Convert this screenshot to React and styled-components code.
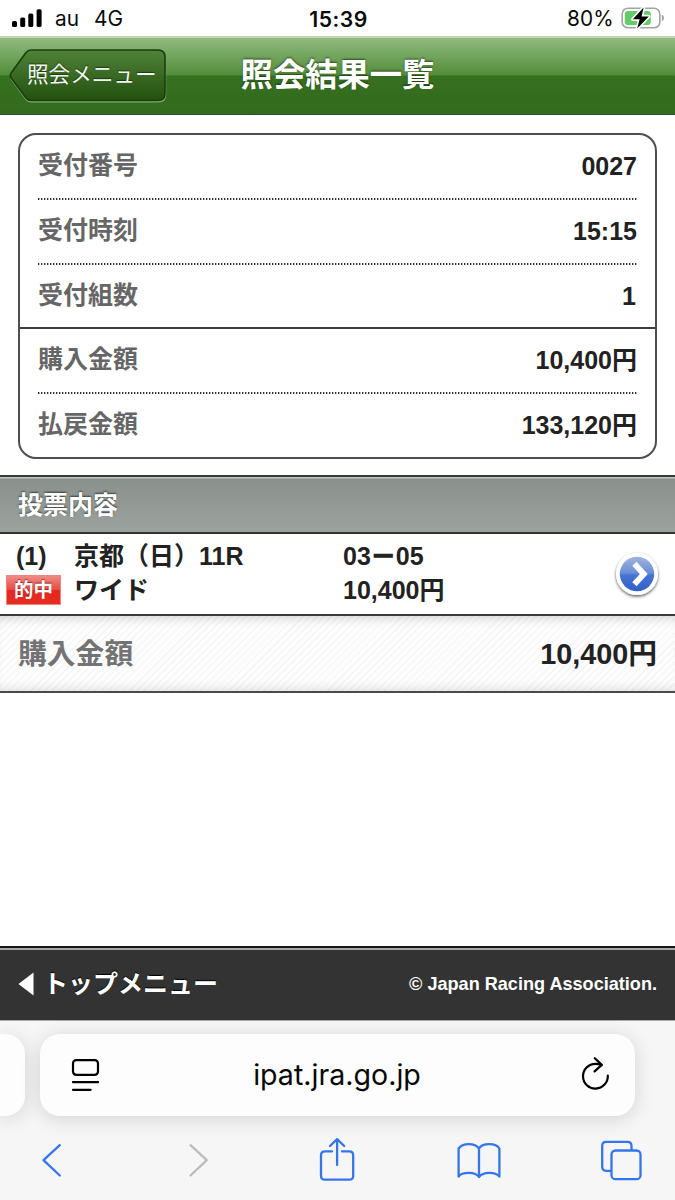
import React from 'react';
import styled, { createGlobalStyle } from 'styled-components';

const RECEIPT_ROWS = [
  { label: '受付番号', value: '0027', height: 65 },
  { label: '受付時刻', value: '15:15', height: 65 },
  { label: '受付組数', value: '1', height: 64, inset: 1, line: 'solid' },
  { label: '購入金額', value: '10,400円', height: 65 },
  { label: '払戻金額', value: '133,120円', height: 63, line: 'none' },
];

const StatusBar = () => (
  <StatusWrapper>
    <Carrier>
      <svg width="30" height="20" viewBox="0 0 30 20">
        <rect x="0" y="13" width="5" height="6" rx="1.6" />
        <rect x="8.2" y="9.5" width="5" height="9.5" rx="1.6" />
        <rect x="16.3" y="5.5" width="5" height="13.5" rx="1.6" />
        <rect x="24.6" y="1.2" width="5" height="17.8" rx="1.6" />
      </svg>
      <span>au</span>
      <span>4G</span>
    </Carrier>
    <Clock>15:39</Clock>
    <Battery>
      <span>80%</span>
      <svg width="44" height="24" viewBox="0 0 44 24">
        <rect
          x="1.2"
          y="2.2"
          width="37.6"
          height="19.6"
          rx="5.8"
          fill="none"
          stroke="#a3a3a5"
          strokeWidth="1.6"
        />
        <path d="M40.8 8.6q2.2 1 2.2 3.4t-2.2 3.4z" fill="#a3a3a5" />
        <rect x="3.8" y="5" width="26" height="14" rx="3.2" fill="#64cb67" />
        <path
          d="M22.6 1.6L11.8 13.3h6.8L16.2 22.6 27.8 10.4h-7.2z"
          fill="#000"
          stroke="#fff"
          strokeWidth="3.4"
          paintOrder="stroke"
          strokeLinejoin="round"
        />
      </svg>
    </Battery>
  </StatusWrapper>
);

const Header = () => (
  <HeaderWrapper>
    <BackButton>
      <svg width="158" height="54" viewBox="0 0 158 54">
        <defs>
          <linearGradient id="back" x1="0" y1="0" x2="0" y2="1">
            <stop offset="0" stopColor="#508238" />
            <stop offset="1" stopColor="#23500f" />
          </linearGradient>
        </defs>
        <path
          d="M22 2.2H149Q156.5 2.2 156.5 9V45.5Q156.5 52.8 149 52.8H22Q19 52.8 17 50.3L1.5 29"
          fill="none"
          stroke="#80ab6b"
          strokeWidth="1.4"
        />
        <path
          d="M22 1H149Q156 1 156 8V44.5Q156 51.5 149 51.5H22Q19 51.5 17 49L1.8 28.5Q.8 26.5 1.8 24.5L17 3.5Q19 1 22 1z"
          fill="url(#back)"
          stroke="#173f0c"
          strokeWidth="1.6"
        />
      </svg>
      <span>照会メニュー</span>
    </BackButton>
    <h1>照会結果一覧</h1>
  </HeaderWrapper>
);

const ArrowBadge = () => (
  <ArrowButton>
    <svg width="52" height="54" viewBox="0 0 52 54">
      <defs>
        <linearGradient id="blue" x1="0" y1="0" x2="0" y2="1">
          <stop offset="0" stopColor="#a0b3dc" />
          <stop offset="0.46" stopColor="#6a8fd8" />
          <stop offset="0.54" stopColor="#4773d2" />
          <stop offset="1" stopColor="#305fcd" />
        </linearGradient>
        <filter id="drop" x="-20%" y="-20%" width="140%" height="140%">
          <feDropShadow
            dx="0"
            dy="1.5"
            stdDeviation="1.6"
            floodOpacity="0.65"
          />
        </filter>
      </defs>
      <circle cx="26" cy="26" r="21" fill="#fff" filter="url(#drop)" />
      <circle cx="26" cy="26" r="17.2" fill="url(#blue)" />
      <path
        d="M23.4 15.8L32.8 26 23.4 36.2"
        fill="none"
        stroke="#fff"
        strokeWidth="5.8"
      />
    </svg>
  </ArrowButton>
);

const BrowserBar = () => (
  <BrowserWrapper>
    <AddressRow>
      <PrevTab />
      <AddressBox>
        <svg width="30" height="36" viewBox="0 0 30 36">
          <rect x="2" y="3.2" width="25" height="14.6" rx="3.2" />
          <path d="M2 25.2h25M2 32.8h17.6" />
        </svg>
        <span>ipat.jra.go.jp</span>
        <svg width="30" height="36" viewBox="0 0 30 36">
          <path d="M27.8 18.6A12.4 12.4 0 1 1 15.4 6.8Q18.4 6.8 21.4 7.9" />
          <path d="M14.8 1.2L21.8 7.9 14.6 14.4" />
        </svg>
      </AddressBox>
    </AddressRow>
    <Toolbar>
      <svg width="22" height="46" viewBox="0 0 22 46">
        <path d="M18.8 8.2L2.500 23.2l16.3 15.3" />
      </svg>
      <MutedIcon width="22" height="46" viewBox="0 0 22 46">
        <path d="M2.5 8.2L18.8 23.2 2.5 38.5" />
      </MutedIcon>
      <svg width="36" height="46" viewBox="0 0 36 46">
        <path d="M13 14.4H6Q2 14.4 2 18.4V38.7Q2 42.7 6 42.7H30.2Q34.2 42.7 34.2 38.7V18.4Q34.2 14.4 30.2 14.4H23" />
        <path d="M18.1 28V2.2M11 9L18.1 2.2 25.2 9" />
      </svg>
      <svg width="44" height="46" viewBox="0 0 44 46">
        <path d="M22 11.5Q19 7.1 11.8 7.1T1.6 11.5V39.5Q4 35.9 11.8 35.9T22 40Q25 35.9 32.2 35.9T42.4 39.5V11.5Q40 7.1 32.2 7.1T22 11.5zM22 11.5V40" />
      </svg>
      <svg width="42" height="46" viewBox="0 0 42 46">
        <path d="M10.5 33.8H6.2Q2.2 33.8 2.2 29.8V8.8Q2.2 4.8 6.2 4.8H27.5Q31.5 4.8 31.5 8.8V12.5" />
        <rect x="11.5" y="13.5" width="29" height="28.7" rx="4" />
      </svg>
    </Toolbar>
  </BrowserWrapper>
);

const App = () => (
  <>
    <GlobalStyle />
    <Screen>
      <StatusBar />
      <Header />
      <Content>
        <Card>
          {RECEIPT_ROWS.map(row => (
            <CardRow key={row.label} $height={row.height} $line={row.line}>
              <dt>{row.label}</dt>
              <Value $inset={row.inset}>{row.value}</Value>
            </CardRow>
          ))}
        </Card>
        <SectionTitle>投票内容</SectionTitle>
        <BetRow>
          <BetIndex>
            <span>(1)</span>
            <HitBadge>的中</HitBadge>
          </BetIndex>
          <BetText $width={269}>
            <span>京都（日）11R</span>
            <span>ワイド</span>
          </BetText>
          <BetText $width={268}>
            <span>
              03<Dash>－</Dash>05
            </span>
            <span>10,400円</span>
          </BetText>
          <ArrowBadge />
        </BetRow>
        <TotalRow>
          <TotalLabel>購入金額</TotalLabel>
          <span>10,400円</span>
        </TotalRow>
      </Content>
      <Footer>
        <TopLink>
          <svg width="16" height="24" viewBox="0 0 16 24">
            <path d="M15.5 .5V23.5L.5 12z" fill="#fff" />
          </svg>
          <span>トップメニュー</span>
        </TopLink>
        <small>© Japan Racing Association.</small>
      </Footer>
      <BrowserBar />
    </Screen>
  </>
);

export default App;

const GlobalStyle = createGlobalStyle`
  * {
    box-sizing: border-box;
  }
  body {
    margin: 0;
    background-color: #fff;
  }
  svg {
    display: block;
    flex-shrink: 0;
  }
`;

const Screen = styled.div`
  display: flex;
  flex-direction: column;
  width: 675px;
  height: 1200px;
  overflow: hidden;
  color: #222;
  font-family: 'Liberation Sans', 'Noto Sans CJK JP', sans-serif;
  font-size: 25px;
  font-weight: 700;
  line-height: 34px;
  white-space: nowrap;
`;

const StatusWrapper = styled.div`
  display: grid;
  grid-template-columns: 1fr auto 1fr;
  align-items: center;
  height: 36px;
  padding: 2px 10px 0 12px;
  color: #0a0a0a;
  font-family: Inter, sans-serif;
  font-size: 20.8px;
  font-weight: 400;
`;

const Carrier = styled.div`
  display: flex;
  align-items: center;
  span {
    margin-left: 13px;
  }
  span + span {
    margin-left: 15px;
  }
  svg {
    margin-top: -3px;
  }
`;

const Clock = styled.div`
  font-size: 21.2px;
  font-weight: 600;
  letter-spacing: 0.5px;
`;

const Battery = styled.div`
  display: flex;
  align-items: center;
  justify-content: flex-end;
  gap: 7px;
  letter-spacing: 0.2px;
  svg {
    margin-top: -3px;
  }
`;

const HeaderWrapper = styled.header`
  display: grid;
  grid-template-columns: 1fr auto 1fr;
  align-items: center;
  height: 79px;
  padding: 0 9px;
  border-top: 2px solid #bfd7b0;
  border-bottom: 1px solid #3b4c38;
  background: linear-gradient(
    #91bb80 0,
    #528d39 37px,
    #35701f 38px,
    #346a1e 100%
  );
  h1 {
    margin: 0 0 2px;
    color: #fff;
    font-size: 32.3px;
    line-height: 40px;
    text-shadow: 0 -1px 2px rgba(0, 0, 0, 0.55);
  }
`;

const BackButton = styled.a`
  display: grid;
  justify-self: start;
  align-items: center;
  margin-top: -1px;
  color: #f1f8ee;
  font-size: 21.6px;
  font-weight: 400;
  text-shadow: 0 -1px 1px rgba(0, 0, 0, 0.5);
  svg,
  span {
    grid-area: 1 / 1;
  }
  span {
    padding: 0 0 1px 18px;
  }
`;

const Content = styled.main`
  flex: 1;
`;

const Card = styled.dl`
  margin: 18px 18px 16px;
  border: 2px solid #4e4e4e;
  border-radius: 18px;
`;

const dotted = `
  background: repeating-linear-gradient(
    90deg, #2b2b2b 0 1px, #b5b5b5 1px 2px, #fff 2px 3px
  ) 18px 100% / 600px 2px no-repeat;
`;

const CardRow = styled.div`
  display: flex;
  align-items: center;
  justify-content: space-between;
  height: ${props => props.$height}px;
  padding: 0 18px ${props => (props.$line ? 1 : 3)}px;
  ${props => !props.$line && dotted}
  border-bottom: ${props =>
    props.$line === 'solid' ? '2px solid #3c3c3c' : 'none'};
  dt {
    padding-bottom: 2px;
    color: #666;
  }
`;

const Value = styled.dd`
  margin: 0;
  padding-right: ${props => props.$inset || 0}px;
`;

const SectionTitle = styled.h2`
  height: 59px;
  margin: 0;
  padding: 0 18px;
  border-top: 2px solid #373735;
  border-bottom: 2px solid #303332;
  background: linear-gradient(#c3c6c3 0 1px, #8a908b 2px, #9ca29e 100%);
  color: #fff;
  font-size: 25px;
  line-height: 57px;
  text-shadow: 0 -1px 2px rgba(0, 0, 0, 0.6);
`;

const BetRow = styled.div`
  display: flex;
  align-items: center;
  height: 80px;
`;

const BetIndex = styled.div`
  display: flex;
  flex-direction: column;
  width: 74px;
  padding: 0 0 2px 6px;
  > span:first-child {
    padding-left: 10px;
  }
`;

const HitBadge = styled.em`
  width: 55px;
  height: 30px;
  margin: 2px 0;
  border: 1px solid #f0837b;
  background: linear-gradient(#ef8b84, #e84b43 49%, #e3281f 50%, #e62d22);
  color: #fff;
  font-size: 19.5px;
  font-style: normal;
  line-height: 29px;
  text-align: center;
  text-shadow: 0 -1px 1px rgba(90, 0, 0, 0.6);
`;

const BetText = styled.div`
  display: flex;
  flex-direction: column;
  width: ${props => props.$width}px;
  padding-bottom: 2px;
`;

const Dash = styled.span`
  -webkit-text-stroke: 1.4px currentColor;
`;

const ArrowButton = styled.a`
  padding-top: 2px;
`;

const TotalRow = styled.div`
  display: flex;
  align-items: center;
  justify-content: space-between;
  height: 79px;
  padding: 0 18px;
  border-top: 2px solid #3a3a3a;
  border-bottom: 2px solid #4a4a4a;
  background: repeating-linear-gradient(
    135deg,
    #fdfdfd 0 3.5px,
    #f3f3f3 4.5px 5px
  );
  box-shadow: inset 0 10px 12px -9px rgba(0, 0, 0, 0.2),
    inset 0 -10px 12px -9px rgba(0, 0, 0, 0.14);
  font-size: 28.8px;
`;

const TotalLabel = styled.span`
  color: #737373;
`;

const Footer = styled.footer`
  display: flex;
  align-items: center;
  justify-content: space-between;
  height: 75px;
  padding: 0 18px 1px;
  border-top: 2px solid #171717;
  border-bottom: 1px solid #aaa;
  background: linear-gradient(#a6a8a7 0 2px, #333 2px);
  color: #fff;
  small {
    font-size: 18.1px;
  }
`;

const TopLink = styled.a`
  display: flex;
  align-items: center;
  gap: 9px;
  text-shadow: 0 -1px 1px #000;
`;

const BrowserWrapper = styled.nav`
  height: 179px;
  padding-top: 13px;
  background-color: #f6f6f6;
`;

const AddressRow = styled.div`
  display: flex;
  gap: 15px;
`;

const PrevTab = styled.div`
  width: 25px;
  height: 82px;
  border-radius: 0 20px 20px 0;
  background-color: #fdfdfd;
  box-shadow: 0 3px 20px rgba(0, 0, 0, 0.14);
`;

const AddressBox = styled.div`
  display: flex;
  align-items: center;
  justify-content: space-between;
  width: 595px;
  height: 82px;
  padding: 0 25px 0 31px;
  border-radius: 20px;
  background-color: #fdfdfd;
  box-shadow: 0 3px 20px rgba(0, 0, 0, 0.14);
  color: #080808;
  font-family: Inter, sans-serif;
  font-size: 28.6px;
  font-weight: 400;
  span {
    padding-right: 7px;
  }
  svg {
    fill: none;
    stroke: #000;
    stroke-width: 2.2;
    stroke-linecap: round;
    stroke-linejoin: round;
  }
`;

const Toolbar = styled.div`
  display: grid;
  grid-template-columns: 147px 131px 138px 143px 42px;
  padding: 21px 33px 0 41px;
  svg {
    fill: none;
    stroke: #3476ea;
    stroke-width: 2.3;
    stroke-linecap: round;
    stroke-linejoin: round;
  }
`;

const MutedIcon = styled.svg`
  && {
    stroke: #bcbcbc;
  }
`;
